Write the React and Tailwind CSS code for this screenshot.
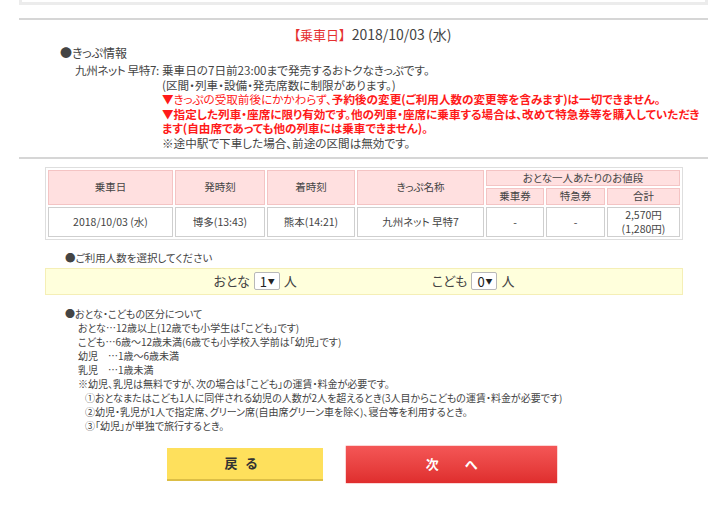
const font = "[font-family:'Noto_Sans_CJK_JP','Noto_Sans',sans-serif] [font-feature-settings:'palt']";

function Select({ value }) {
    return (
        <span className="inline-flex h-[18px] w-[26px] items-center justify-between rounded-[2px] border border-[#b8b8b8] bg-white pr-[4px] pl-[5px] text-[13px] leading-none text-[#222]">
            <span>{value}</span>
            <span className="text-[7px]">▼</span>
        </span>
    );
}

function HeadCell({ children, className = '', ...rest }) {
    return (
        <th
            {...rest}
            className={`border border-[#f4c4c4] bg-[#ffe0e0] p-0 text-center text-[10.5px] leading-[14px] font-normal text-[#444] ${className}`}
        >
            {children}
        </th>
    );
}

function DataCell({ children }) {
    return (
        <td className="h-[29px] border border-[#cfcfcf] bg-white p-0 text-center text-[10.5px] leading-[14px] text-[#444]">
            {children}
        </td>
    );
}

export default function App() {
    return (
        <div className={`relative h-[511px] w-[720px] overflow-hidden bg-white text-[#444] ${font}`}>
            <div className="ml-[19px] w-[689px]">
                <div className="h-[5px] border-x-[3px] border-b-[3px] border-[#ececec]" />
                <div className="mt-[13px] border-t-2 border-[#d6d6d6]" />

                <div className="pt-[4px] pl-[18px] text-center leading-[18px]">
                    <span className="text-[13px] text-[#e53030]">【乗車日】</span>
                    <span className="ml-[6px] text-[14px]">2018/10/03 (水)</span>
                </div>

                <div className="mt-[1px] pl-[41px] text-[12px] leading-[15px]">●きっぷ情報</div>

                <div className="mt-[3px] flex pl-[56px] text-[11.6px] leading-[14.6px] whitespace-nowrap">
                    <div className="w-[87px] shrink-0 tracking-[-0.4px]">九州ネット 早特7:</div>
                    <div className="flex flex-col">
                        <span>乗車日の7日前23:00まで発売するおトクなきっぷです。</span>
                        <span>(区間・列車・設備・発売席数に制限があります。)</span>
                        <span className="text-[#ff1a1a]">
                            ▼きっぷの受取前後にかかわらず、
                            <b>予約後の変更(ご利用人数の変更等を含みます)は一切できません。</b>
                        </span>
                        <b className="text-[#ff1a1a]">
                            ▼指定した列車・座席に限り有効です。他の列車・座席に乗車する場合は、改めて特急券等を購入していただき
                        </b>
                        <b className="text-[#ff1a1a]">ます(自由席であっても他の列車には乗車できません)。</b>
                        <span>※途中駅で下車した場合、前途の区間は無効です。</span>
                    </div>
                </div>

                <div className="mt-[6px] border-t-2 border-[#d6d6d6]" />
            </div>

            <table className="mt-[8px] ml-[45px] w-[638px] border-separate border-spacing-[2px] border border-[#dedede] bg-white">
                <thead>
                    <tr className="h-[16px]">
                        <HeadCell rowSpan={2} className="w-[125px]">乗車日</HeadCell>
                        <HeadCell rowSpan={2} className="w-[90px]">発時刻</HeadCell>
                        <HeadCell rowSpan={2} className="w-[88px]">着時刻</HeadCell>
                        <HeadCell rowSpan={2} className="w-[127px]">きっぷ名称</HeadCell>
                        <HeadCell colSpan={3}>おとな一人あたりのお値段</HeadCell>
                    </tr>
                    <tr className="h-[17px]">
                        <HeadCell className="w-[58px]">乗車券</HeadCell>
                        <HeadCell className="w-[59px]">特急券</HeadCell>
                        <HeadCell>合計</HeadCell>
                    </tr>
                </thead>
                <tbody>
                    <tr>
                        <DataCell>2018/10/03 (水)</DataCell>
                        <DataCell>博多(13:43)</DataCell>
                        <DataCell>熊本(14:21)</DataCell>
                        <DataCell>九州ネット 早特7</DataCell>
                        <DataCell>-</DataCell>
                        <DataCell>-</DataCell>
                        <DataCell>
                            2,570円
                            <br />
                            (1,280円)
                        </DataCell>
                    </tr>
                </tbody>
            </table>

            <div className="mt-[11px] pl-[65px] text-[10.5px] leading-[14px]">●ご利用人数を選択してください</div>

            <div className="mt-[3px] ml-[45px] flex h-[27px] w-[638px] items-center justify-center gap-[135px] border border-[#f5efb6] bg-[#ffffdc] text-[13px]">
                <div className="flex items-center gap-[4px]">
                    <span>おとな</span>
                    <Select value="1" />
                    <span>人</span>
                </div>
                <div className="flex items-center gap-[4px]">
                    <span>こども</span>
                    <Select value="0" />
                    <span>人</span>
                </div>
            </div>

            <div className="mt-[12px] flex flex-col pl-[65px] text-[10px] leading-[14px] whitespace-nowrap">
                <span>●おとな・こどもの区分について</span>
                <div className="flex flex-col pl-[13px]">
                    <span>おとな…12歳以上(12歳でも小学生は「こども」です)</span>
                    <span>こども…6歳～12歳未満(6歳でも小学校入学前は「幼児」です)</span>
                    <span>幼児　…1歳～6歳未満</span>
                    <span>乳児　…1歳未満</span>
                    <span>※幼児、乳児は無料ですが、次の場合は「こども」の運賃・料金が必要です。</span>
                    <div className="flex flex-col pl-[7px]">
                        <span>①おとなまたはこども1人に同伴される幼児の人数が2人を超えるとき(3人目からこどもの運賃・料金が必要です)</span>
                        <span>②幼児・乳児が1人で指定席、グリーン席(自由席グリーン車を除く)、寝台等を利用するとき。</span>
                        <span>③「幼児」が単独で旅行するとき。</span>
                    </div>
                </div>
            </div>

            <div className="mt-[12px] flex items-center justify-center gap-[22px] pl-[5px]">
                <button className="h-[33px] w-[156px] border-b-2 border-[#dcbe45] bg-[#fee05c] text-[13px] font-bold tracking-[8px] text-[#333]">
                    戻る
                </button>
                <div className="rounded-[2px] bg-[#fcd6d6] p-[1px]">
                    <button className="h-[37px] w-[211px] bg-gradient-to-b from-[#f45656] to-[#df2d2d] text-[13px] font-bold text-white">
                        次　　へ
                    </button>
                </div>
            </div>
        </div>
    );
}
